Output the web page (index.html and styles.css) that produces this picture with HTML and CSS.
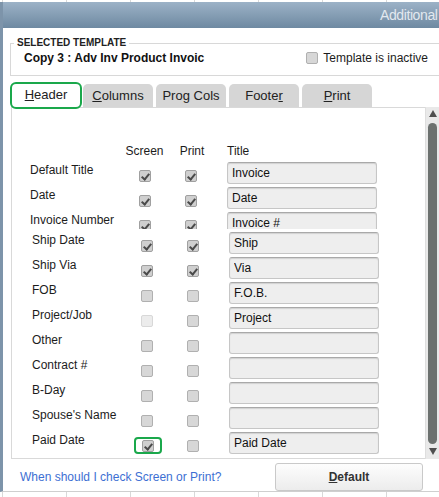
FILE: index.html
```html
<!DOCTYPE html>
<html lang="en">
<head>
  <meta charset="UTF-8">
  <meta name="viewport" content="width=device-width, initial-scale=1.0">
  <title>Additional Customization</title>
  <link rel="stylesheet" href="styles.css">
</head>
<body>
  <div class="window">
    <div class="titlebar">Additional</div>

    <!-- Template picked for editing -->
    <fieldset class="template-box">
      <legend>SELECTED TEMPLATE</legend>
      <div class="template-row">
        <span class="template-name">Copy 3 : Adv Inv Product Invoic</span>
        <span class="inactive"><span class="cb"></span>Template is inactive</span>
      </div>
    </fieldset>

    <!-- Tabs -->
    <div class="tabs">
      <div class="tab tab-active"><u>H</u>eader</div>
      <div class="tab"><u>C</u>olumns</div>
      <div class="tab">Pro<u>g</u> Cols</div>
      <div class="tab">Foote<u>r</u></div>
      <div class="tab"><u>P</u>rint</div>
    </div>

    <div class="panel">
      <div class="panel-body">
        <div class="row row-head">
          <span></span>
          <span class="col-center">Screen</span>
          <span class="col-center">Print</span>
          <span class="title-head">Title</span>
        </div>

        <div class="row">
          <span class="label">Default Title</span>
          <span class="cb checked"></span>
          <span class="cb checked cb-print"></span>
          <input class="field" type="text" value="Invoice">
        </div>
        <div class="row">
          <span class="label">Date</span>
          <span class="cb checked"></span>
          <span class="cb checked cb-print"></span>
          <input class="field" type="text" value="Date">
        </div>
        <div class="row row-cut">
          <span class="label">Invoice Number</span>
          <span class="cb checked"></span>
          <span class="cb checked cb-print"></span>
          <input class="field" type="text" value="Invoice #">
        </div>

        <div class="rows-lower">
          <div class="row">
            <span class="label">Ship Date</span>
            <span class="cb checked"></span>
            <span class="cb checked cb-print"></span>
            <input class="field" type="text" value="Ship">
          </div>
          <div class="row">
            <span class="label">Ship Via</span>
            <span class="cb checked"></span>
            <span class="cb checked cb-print"></span>
            <input class="field" type="text" value="Via">
          </div>
          <div class="row">
            <span class="label">FOB</span>
            <span class="cb"></span>
            <span class="cb cb-print"></span>
            <input class="field" type="text" value="F.O.B.">
          </div>
          <div class="row">
            <span class="label">Project/Job</span>
            <span class="cb disabled"></span>
            <span class="cb cb-print"></span>
            <input class="field" type="text" value="Project">
          </div>
          <div class="row">
            <span class="label">Other</span>
            <span class="cb"></span>
            <span class="cb cb-print"></span>
            <input class="field" type="text" value="">
          </div>
          <div class="row">
            <span class="label">Contract #</span>
            <span class="cb"></span>
            <span class="cb cb-print"></span>
            <input class="field" type="text" value="">
          </div>
          <div class="row">
            <span class="label">B-Day</span>
            <span class="cb"></span>
            <span class="cb cb-print"></span>
            <input class="field" type="text" value="">
          </div>
          <div class="row">
            <span class="label">Spouse's Name</span>
            <span class="cb"></span>
            <span class="cb cb-print"></span>
            <input class="field" type="text" value="">
          </div>
          <div class="row">
            <span class="label">Paid Date</span>
            <span class="hilite"><span class="cb checked"></span></span>
            <span class="cb cb-print"></span>
            <input class="field" type="text" value="Paid Date">
          </div>
        </div>
      </div>

      <div class="scrollbar">
        <span class="arrow-up"></span>
        <span class="thumb"></span>
        <span class="arrow-down"></span>
      </div>
    </div>

    <div class="footer">
      <a class="help-link" href="#">When should I check Screen or Print?</a>
      <button class="btn-default"><u>D</u>efault</button>
    </div>
  </div>
</body>
</html>
```

FILE: styles.css
```css
body {
  margin: 0;
  height: 497px;
  overflow: hidden;
  font-family: "Liberation Sans", Arial, sans-serif;
  font-size: 12px;
  color: #1c1c1c;
  background-color: #fff;
  /* spreadsheet grid behind the dialog */
  background-image: linear-gradient(90deg, #d9d9d9 1px, transparent 1px);
  background-size: 64px 100%;
  background-position: 2px 0;
}

.window {
  margin-top: 2px;
  background: #fff;
  border-left: 3px solid #7d94aa;
  border-bottom: 1px solid #cfcfcf;
  overflow: hidden;
}

.titlebar {
  height: 26px;
  line-height: 26px;
  padding-left: 377px;
  font-size: 14px;
  letter-spacing: -0.4px;
  color: #e2e8ef;
  white-space: nowrap;
  overflow: hidden;
  background: linear-gradient(#9cb2c7, #6e89a1);
}

/* selected template box */
.template-box {
  margin: 9px -20px 0 7px;
  padding: 2px 30px 10px 13px;
  border: 1px solid #d8d8d8;
}
.template-box legend {
  margin-left: -10px;
  padding: 0 3px;
  font-size: 10px;
  line-height: 12px;
  font-weight: bold;
  color: #222;
}
.template-row {
  display: flex;
  align-items: center;
  height: 14px;
}
.template-name {
  font-weight: bold;
  color: #111;
}
.inactive {
  margin-left: auto;
  display: flex;
  align-items: center;
  gap: 5px;
}

/* checkboxes */
.cb {
  position: relative;
  display: inline-block;
  width: 12px;
  height: 12px;
  box-sizing: border-box;
  border: 1px solid #b0b0b0;
  border-radius: 2px;
  background: #d7d7d7;
}
.cb.checked {
  background: #cfcfcf;
  border-color: #a0a0a0;
}
.cb.checked::after {
  content: "";
  position: absolute;
  left: 3px;
  top: 1px;
  width: 3px;
  height: 6px;
  border-right: 2px solid #4a4a4a;
  border-bottom: 2px solid #4a4a4a;
  transform: rotate(40deg);
}
.cb.disabled {
  background: #ececec;
  border-color: #d8d8d8;
}

/* tabs */
.tabs {
  display: flex;
  align-items: flex-end;
  gap: 3px;
  height: 25px;
  margin-top: 6px;
  padding-left: 7px;
}
.tab {
  width: 70px;
  height: 23px;
  line-height: 23px;
  text-align: center;
  font-size: 13px;
  color: #222;
  background: #d6d6d6;
  border-radius: 5px 5px 0 0;
}
.tab-active {
  position: relative;
  z-index: 1;
  width: 72px;
  height: 27px;
  line-height: 22px;
  box-sizing: border-box;
  margin-right: -2px;
  margin-bottom: -2px;
  background: #fff;
  border: 2px solid #1aa84b;
  border-radius: 6px;
}

/* tab panel */
.panel {
  display: flex;
  margin-left: 8px;
}
.panel-body {
  flex: 1;
  padding: 36px 0 1px 18px;
  border: 1px solid #d9d9d9;
  border-right: none;
}
.row {
  display: grid;
  grid-template-columns: 100px 29px 66px 152px;
  height: 25px;
}
.row-head {
  height: 14px;
  line-height: 14px;
  margin-bottom: 4px;
}
.row-cut {
  height: 17px;
  margin-bottom: 3px;
  overflow: hidden;
}
.rows-lower {
  padding-left: 2px;
}
.col-center {
  justify-self: center;
  white-space: nowrap;
}
.title-head {
  padding-left: 2px;
}
.label {
  margin-top: 1px;
  line-height: 14px;
  white-space: nowrap;
}
.row .cb {
  justify-self: center;
  margin-top: 8px;
}
.row .cb-print {
  margin-right: 3px;
}
.hilite {
  justify-self: center;
  display: flex;
  align-items: center;
  justify-content: center;
  width: 28px;
  height: 17px;
  box-sizing: border-box;
  margin: 5px 0 0 2px;
  border: 2px solid #1aa84b;
  border-radius: 4px;
}
.row .hilite .cb {
  margin-top: 1px;
}
.field {
  width: 150px;
  height: 22px;
  box-sizing: border-box;
  margin: 0 0 0 2px;
  padding: 0 4px;
  font-family: "Liberation Sans", Arial, sans-serif;
  font-size: 12px;
  color: #111;
  background: #eeeeee;
  border: 1px solid #c6c6c6;
  border-top-color: #a9a9a9;
  border-radius: 3px;
  box-shadow: inset 0 1px 1px rgba(0, 0, 0, 0.12);
}

/* scrollbar */
.scrollbar {
  width: 13px;
  display: flex;
  flex-direction: column;
  align-items: center;
  padding: 3px 0 4px;
  background: #e9e9e9;
  border-left: 1px solid #dedede;
}
.arrow-up,
.arrow-down {
  width: 0;
  height: 0;
  border-left: 4px solid transparent;
  border-right: 4px solid transparent;
}
.arrow-up {
  border-bottom: 7px solid #4f4f4f;
}
.arrow-down {
  border-top: 7px solid #4f4f4f;
}
.thumb {
  flex: 1;
  width: 9px;
  margin: 6px 0 4px;
  background: #6c716f;
  border-radius: 5px;
}

/* bottom bar */
.footer {
  display: flex;
  align-items: flex-end;
  height: 32px;
  box-sizing: border-box;
  padding: 0 16px 0 17px;
}
.help-link {
  align-self: center;
  margin-top: 4px;
  color: #3d6fd3;
  text-decoration: none;
}
.btn-default {
  margin-left: auto;
  width: 148px;
  height: 28px;
  font-family: "Liberation Sans", Arial, sans-serif;
  font-size: 12px;
  font-weight: bold;
  color: #333;
  background: linear-gradient(#fdfdfd, #ececec);
  border: 1px solid #c9c9c9;
  border-radius: 3px;
}
```
